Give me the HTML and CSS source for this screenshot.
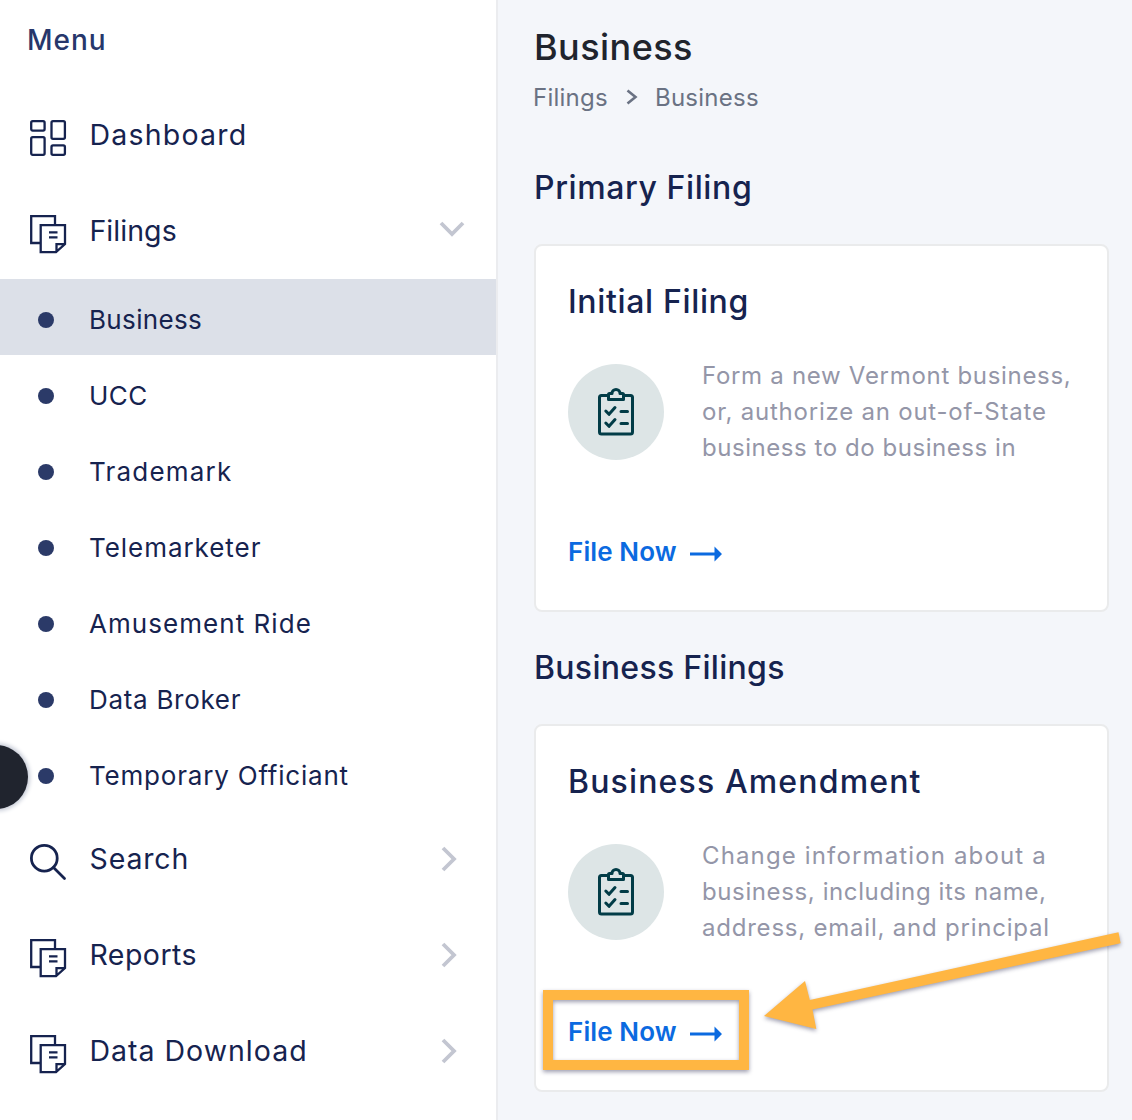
FILE: index.html
```html
<!DOCTYPE html>
<html lang="en">
<head>
<meta charset="utf-8">
<title>Business Filings</title>
<link rel="stylesheet" href="styles.css">
</head>
<body>
<svg width="0" height="0" class="defs">
  <symbol id="pages" viewBox="0 0 38 40">
    <path d="M11 29H2.200V2.200H26v9M11.700 11.200H36V30l-9 8.200H11.700ZM27.500 38V30.200H36"/>
    <path d="M20 18.400h8.500M20 23.400h8.500"/>
  </symbol>
  <symbol id="clipboard" viewBox="0 0 38 50">
    <path d="M10.500 8.500H4.500a2 2 0 0 0-2 2V45a2 2 0 0 0 2 2H33.500a2 2 0 0 0 2-2V10.500a2 2 0 0 0-2-2H27.500"/>
    <path d="M11.500 12.500V7.500a1 1 0 0 1 1-1H15a4 4 0 0 1 8 0h2.500a1 1 0 0 1 1 1v5Z"/>
    <path d="M8.800 24 12 27.300 18 20.500M8.800 36 12 39.300 18 32.500M24 24.500h6.500M24 36.500h6.500"/>
  </symbol>
</svg>
<div class="layout">
  <nav class="sidebar">
    <div class="menu-title">Menu</div>
    <a class="item">
      <svg class="icon" width="38" height="40" viewBox="0 0 38 40"><rect x="2.200" y="3.200" width="13.400" height="9.400" rx="1.500"/><rect x="22.500" y="3.200" width="13.400" height="17.600" rx="1.500"/><rect x="2.200" y="19.200" width="13.400" height="17.600" rx="1.500"/><rect x="22.500" y="27.400" width="13.400" height="9.400" rx="1.500"/></svg>
      <span class="label dashboard">Dashboard</span>
    </a>
    <a class="item">
      <svg class="icon" width="38" height="40"><use href="#pages"/></svg>
      <span class="label filings">Filings</span>
      <svg class="chev down" width="26" height="18" viewBox="0 0 26 18"><path d="M2 3 13 14 24 3"/></svg>
    </a>
    <div class="submenu">
      <a class="sub active"><i></i><span class="s-business">Business</span></a>
      <a class="sub"><i></i><span class="s-ucc">UCC</span></a>
      <a class="sub"><i></i><span class="s-trademark">Trademark</span></a>
      <a class="sub"><i></i><span class="s-tele">Telemarketer</span></a>
      <a class="sub"><i></i><span class="s-ride">Amusement Ride</span></a>
      <a class="sub"><i></i><span class="s-broker">Data Broker</span></a>
      <a class="sub"><i></i><span class="s-officiant">Temporary Officiant</span></a>
    </div>
    <a class="item">
      <svg class="icon search-icon" width="38" height="40" viewBox="0 0 38 40"><circle cx="15.300" cy="16.200" r="12.900"/><path d="M24.500 25.500 35.500 36.500"/></svg>
      <span class="label search">Search</span>
      <svg class="chev" width="18" height="26" viewBox="0 0 18 26"><path d="M3 2 14 13 3 24"/></svg>
    </a>
    <a class="item">
      <svg class="icon" width="38" height="40"><use href="#pages"/></svg>
      <span class="label reports">Reports</span>
      <svg class="chev" width="18" height="26" viewBox="0 0 18 26"><path d="M3 2 14 13 3 24"/></svg>
    </a>
    <a class="item">
      <svg class="icon" width="38" height="40"><use href="#pages"/></svg>
      <span class="label download">Data Download</span>
      <svg class="chev" width="18" height="26" viewBox="0 0 18 26"><path d="M3 2 14 13 3 24"/></svg>
    </a>
    <span class="edge-button"></span>
  </nav>
  <main class="main">
    <h1>Business</h1>
    <div class="crumbs">
      <span>Filings</span>
      <svg width="12" height="16" viewBox="0 0 12 16"><path d="M1.500 1.500 9.500 8 1.500 14.500"/></svg>
      <span>Business</span>
    </div>

    <h2 class="h-primary">Primary Filing</h2>
    <section class="card">
      <h3 class="c-initial">Initial Filing</h3>
      <div class="info">
        <span class="badge"><svg width="38" height="50"><use href="#clipboard"/></svg></span>
        <p><span class="d1">Form a new Vermont business,</span><br><span class="d2">or, authorize an out-of-State</span><br><span class="d3">business to do business in</span></p>
      </div>
      <a class="file-now"><span>File Now</span><svg width="34" height="16" viewBox="0 0 34 16"><path d="M1 6.500H25.500V.5L33 8 25.500 15.500V9.500H1Z"/></svg></a>
    </section>

    <h2 class="h-filings">Business Filings</h2>
    <section class="card">
      <h3 class="c-amend">Business Amendment</h3>
      <div class="info">
        <span class="badge"><svg width="38" height="50"><use href="#clipboard"/></svg></span>
        <p><span class="d4">Change information about a</span><br><span class="d5">business, including its name,</span><br><span class="d6">address, email, and principal</span></p>
      </div>
      <a class="file-now"><span>File Now</span><svg width="34" height="16" viewBox="0 0 34 16"><path d="M1 6.500H25.500V.5L33 8 25.500 15.500V9.500H1Z"/></svg></a>
      <span class="highlight"></span>
      <svg class="pointer" width="370" height="110" viewBox="0 0 370 110"><path d="M5 96 46 61 50.800 80 359.500 12.300 361.600 23.300 53.500 89.500 57.300 109Z"/></svg>
    </section>
  </main>
</div>
</body>
</html>
```
FILE: styles.css
```css
* { box-sizing: border-box; }
body {
  margin: 0;
  height: 1120px;
  overflow: hidden;
  font-family: Inter, "Liberation Sans", sans-serif;
  color: #16234f;
  background: #f4f6fa;
}
h1, h2, h3, p { margin: 0; font-weight: 500; white-space: nowrap; }
svg { display: block; flex: none; }
.defs { position: absolute; }
.layout { display: flex; height: 1120px; }

/* Sidebar */
.sidebar {
  position: relative;
  flex: none;
  width: 498px;
  background: #fff;
  border-right: 2px solid #ebecef;
  overflow: hidden;
}
.menu-title {
  height: 87px;
  padding: 20px 0 0 27px;
  line-height: 40px;
  font-size: 28px;
  font-weight: 500;
  letter-spacing: 1px;
  color: #27376b;
}
.item {
  display: flex;
  align-items: center;
  height: 96px;
  padding: 0 38px 0 29px;
  font-size: 28.5px;
}
.icon {
  margin-top: 6px;
  fill: none;
  stroke: #16234f;
  stroke-width: 2.3;
}
.search-icon { stroke-width: 2.8; stroke-linecap: round; }
.label { flex: 1; margin: -1px 0 0 22.5px; line-height: 40px; white-space: nowrap; }
.dashboard { letter-spacing: 1.2px; }
.filings { letter-spacing: .05px; }
.search { letter-spacing: .85px; }
.reports { letter-spacing: .45px; }
.download { letter-spacing: 1px; }
.chev { fill: none; stroke: #c3c6d1; stroke-width: 3.8; }
.chev.down { margin: -5px -7px 0 0; }

.sub {
  display: flex;
  align-items: center;
  height: 76px;
  padding: 6px 0 0 38px;
  font-size: 26px;
  white-space: nowrap;
}
.sub.active { background: #dce0e8; }
.sub i { width: 16px; height: 16px; margin-right: 35px; border-radius: 50%; background: #2b3a68; }
.sub span { margin-top: -2px; }
.s-business { letter-spacing: .35px; }
.s-ucc { letter-spacing: .5px; }
.s-trademark { letter-spacing: 1.2px; }
.s-tele { letter-spacing: .95px; }
.s-ride { letter-spacing: 1.05px; }
.s-broker { letter-spacing: .7px; }
.s-officiant { letter-spacing: .8px; }

.edge-button {
  position: absolute;
  left: -36px;
  top: 745px;
  width: 64px;
  height: 64px;
  border-radius: 50%;
  background: #20242e;
  box-shadow: 0 0 4px 2px #c5cad6;
}

/* Content */
.main { flex: none; width: 634px; padding: 20px 23px 0 36px; }
h1 { line-height: 54px; font-size: 36px; letter-spacing: .45px; color: #20242d; }
.crumbs {
  display: flex;
  align-items: center;
  height: 36px;
  margin: 5px 0 49px -1px;
  font-size: 24px;
  letter-spacing: .25px;
  color: #6a7283;
}
.crumbs svg { margin: 0 17px 0 18px; fill: none; stroke: #6a7283; stroke-width: 2.6; }
h2 { margin: 0 0 32px 0; line-height: 48px; font-size: 32px; }
.h-primary { letter-spacing: .6px; }
.h-filings { letter-spacing: .3px; }
.card {
  position: relative;
  height: 368px;
  margin-bottom: 32px;
  padding: 32px;
  background: #fff;
  border: 2px solid #eaebec;
  border-radius: 8px;
}
h3 { line-height: 48px; font-size: 32px; }
.c-initial { letter-spacing: .65px; }
.c-amend { letter-spacing: 1.15px; }
.info { display: flex; margin-top: 31px; }
.badge {
  display: flex;
  align-items: center;
  justify-content: center;
  flex: none;
  width: 96px;
  height: 96px;
  margin: 7px 38px 0 0;
  border-radius: 50%;
  background: #dde5e6;
}
.badge svg { fill: none; stroke: #023c47; stroke-width: 3; stroke-linejoin: round; stroke-linecap: round; }
.info p { margin: 1px 0 -1px; font-size: 24px; font-weight: 400; line-height: 36px; color: #9496a8; }
.d1 { letter-spacing: .7px; }
.d2 { letter-spacing: .78px; }
.d3 { letter-spacing: .55px; }
.d4 { letter-spacing: 1.14px; }
.d5 { letter-spacing: .61px; }
.d6 { letter-spacing: .78px; }
.file-now {
  display: flex;
  align-items: center;
  height: 40px;
  margin-top: 67px;
  font-size: 26px;
  font-weight: 600;
  letter-spacing: .1px;
  color: #0b6ae0;
}
.file-now span { width: 109px; margin-top: -2px; white-space: nowrap; }
.file-now svg { margin: 3px 0 0 12px; fill: #0b6ae0; }

/* Callout drawn over the second card */
.highlight {
  position: absolute;
  left: 7px;
  top: 264px;
  width: 206px;
  height: 80px;
  border: 10px solid #ffb642;
  filter: drop-shadow(0 2px 2px rgba(40, 40, 80, .45));
}
.pointer {
  position: absolute;
  left: 223px;
  top: 194px;
  overflow: visible;
  fill: #ffb642;
  filter: drop-shadow(0 2px 2px rgba(40, 40, 80, .45));
}
```
